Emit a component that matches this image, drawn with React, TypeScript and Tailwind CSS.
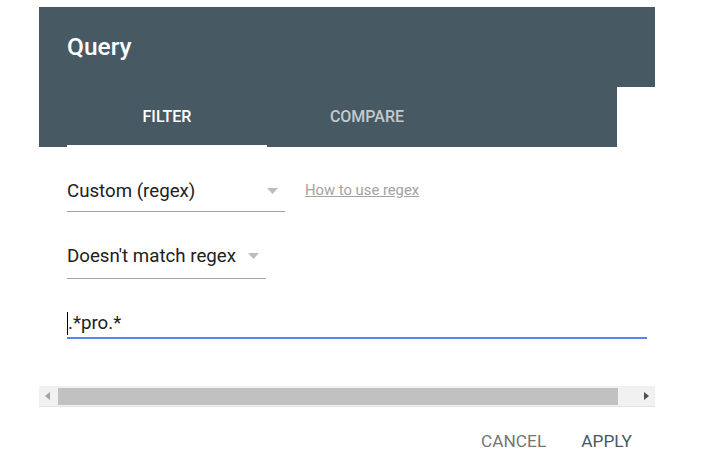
import React from "react";

function Caret({ className }: { className?: string }) {
  return (
    <svg width="11" height="6" viewBox="0 0 11 6" className={className}>
      <path d="M0 0 L11 0 L5.5 6 Z" fill="#bdbdbd" />
    </svg>
  );
}

export default function App() {
  return (
    <div className="min-h-screen bg-white pt-[7px] pl-[39px]" style={{ fontFamily: "Roboto, 'Liberation Sans', sans-serif" }}>
      <div className="w-[616px]">
        {/* Title bar */}
        <div className="h-[80px] bg-[#475a64] pl-[28px] pt-[24px]">
          <div className="text-[24.5px] leading-[32px] font-medium text-white">Query</div>
        </div>
        {/* Tabs */}
        <div className="flex h-[60px] w-[578px] bg-[#475a64] pl-[28px]">
          <div className="flex w-[200px] items-center justify-center border-b-2 border-white pt-[1px]">
            <span className="text-[16px] leading-[20px] font-medium text-white">FILTER</span>
          </div>
          <div className="flex w-[200px] items-center justify-center border-b-2 border-transparent pt-[1px]">
            <span className="text-[16px] leading-[20px] font-medium text-[#c3cacd]">COMPARE</span>
          </div>
        </div>

        {/* Body */}
        <div className="pl-[28px]">
          <div className="mt-[32px] flex items-start gap-[20px]">
            <div className="flex w-[218px] items-center justify-between border-b border-[#a3a3a3] pb-[8px] pr-[7px]">
              <span className="text-[18.7px] leading-[24px] text-[#212121]">Custom (regex)</span>
              <Caret />
            </div>
            <a className="mt-[1px] text-[14.8px] leading-[20px] text-[#a3a3a3] underline decoration-[#a3a3a3]">
              How to use regex
            </a>
          </div>

          <div className="mt-[32px] flex w-[199px] items-center justify-between border-b border-[#a3a3a3] pb-[10px] pr-[7px]">
            <span className="text-[18.7px] leading-[24px] text-[#212121]">Doesn't match regex</span>
            <Caret />
          </div>

          <div className="mt-[32px] flex w-[580px] items-center border-b-2 border-[#5288e8] pb-[2px]">
            <span className="inline-block h-[23px] w-px bg-black" />
            <span className="text-[18.7px] leading-[24px] text-[#212121]">.*pro.*</span>
          </div>
        </div>

        {/* Scrollbar */}
        <div className="mt-[47px] flex h-[21px] items-center border-b border-[#e3e3e3] bg-[#f1f1f1]">
          <div className="flex h-full w-[17px] items-center justify-center">
            <svg width="5" height="8" viewBox="0 0 5 8">
              <path d="M5 0 L0 4 L5 8 Z" fill="#a3a3a3" />
            </svg>
          </div>
          <div className="ml-[2px] h-[17px] w-[560px] bg-[#c1c1c1]" />
          <div className="flex-1" />
          <div className="flex h-full w-[17px] items-center justify-center">
            <svg width="5" height="8" viewBox="0 0 5 8">
              <path d="M0 0 L5 4 L0 8 Z" fill="#505050" />
            </svg>
          </div>
        </div>

        {/* Actions */}
        <div className="mt-[24px] flex justify-end gap-[35px] pr-[23px]">
          <span className="text-[17.3px] leading-[20px] text-[#757575]">CANCEL</span>
          <span className="text-[17.3px] leading-[20px] text-[#475a64]">APPLY</span>
        </div>
      </div>
    </div>
  );
}
